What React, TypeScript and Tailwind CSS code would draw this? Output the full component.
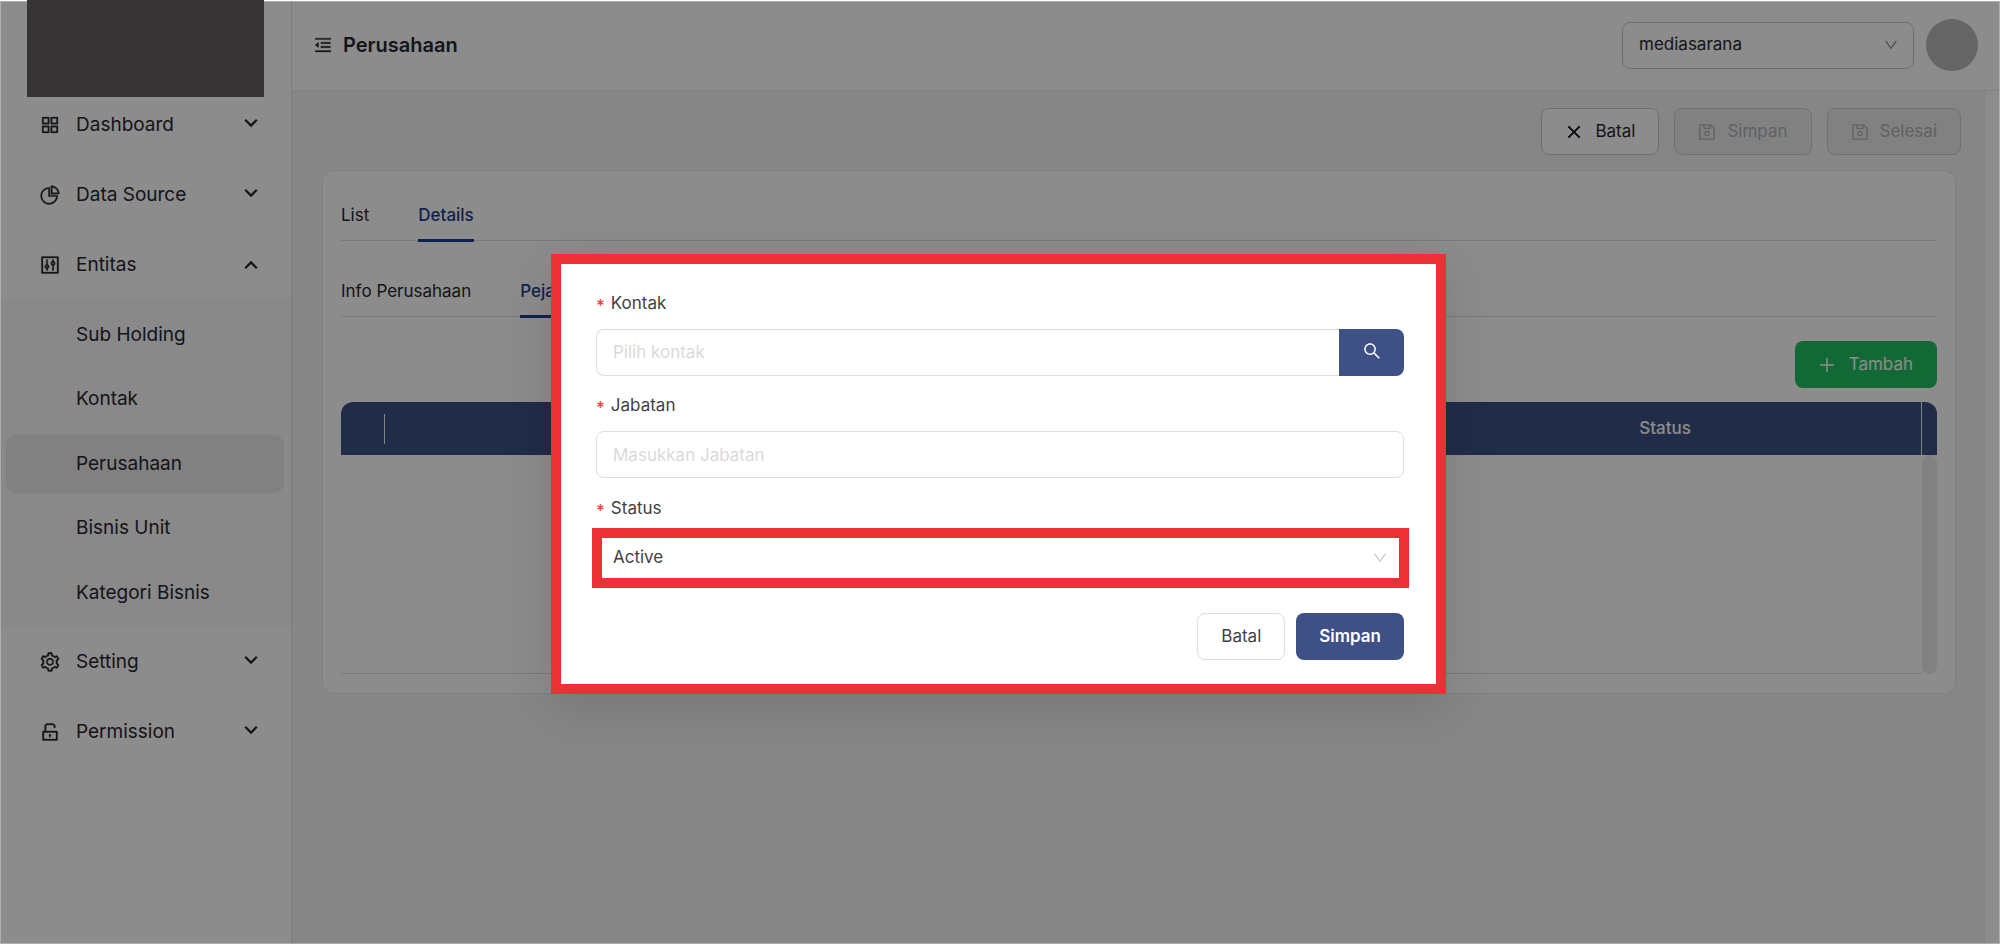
import type { ReactNode } from "react";
import {
  AiOutlineAppstore,
  AiOutlineClose,
  AiOutlineControl,
  AiOutlineDown,
  AiOutlineMenuFold,
  AiOutlinePieChart,
  AiOutlinePlus,
  AiOutlineSave,
  AiOutlineSearch,
  AiOutlineSetting,
  AiOutlineUnlock,
} from "react-icons/ai";

function Caret({ open = false }: { open?: boolean }) {
  return (
    <svg width="14" height="10" viewBox="0 0 14 10" fill="none" stroke="currentColor" strokeWidth="2.2" className={open ? "mt-0" : "-mt-1"} aria-hidden="true">
      <path d={open ? "M1.2 8.2 7 2.4l5.8 5.8" : "M1.2 1.8 7 7.6l5.8-5.8"} />
    </svg>
  );
}

function MenuRow({ icon, label, open }: { icon: ReactNode; label: string; open?: boolean }) {
  return (
    <button type="button" aria-expanded={!!open} className="flex h-[54px] w-full items-center pr-[33px] pl-[39px] text-left">
      <span className="w-[37px] text-[22px]">{icon}</span>
      <span className="flex-1 text-[19px]">{label}</span>
      <Caret open={open} />
    </button>
  );
}

const entitas = ["Sub Holding", "Kontak", "Perusahaan", "Bisnis Unit", "Kategori Bisnis"];

function Sidebar() {
  return (
    <aside className="flex w-[292px] shrink-0 flex-col border-r border-[#e4e4e7] bg-white">
      <div className="relative z-20 mr-[27px] ml-[27px] h-[97px] bg-[#363435]" />
      <nav className="flex flex-col gap-[8px] pt-px">
        <div className="flex flex-col gap-[16px]">
          <MenuRow icon={<AiOutlineAppstore strokeWidth="16" />} label="Dashboard" />
          <MenuRow icon={<AiOutlinePieChart strokeWidth="16" />} label="Data Source" />
          <MenuRow icon={<AiOutlineControl strokeWidth="16" />} label="Entitas" open />
        </div>
        <div className="flex h-[327px] flex-col justify-between border-y border-[#f4f4f5] bg-[#fafafa] pt-[5px] pr-[7px] pb-[4px] pl-[6px]">
          {entitas.map((name) => (
            <a
              key={name}
              href="#"
              className={
                name === "Perusahaan"
                  ? "flex h-[58px] items-center rounded-[10px] bg-[#ebebeb] pl-[70px] text-[19px]"
                  : "flex h-[58px] items-center rounded-[10px] pl-[70px] text-[19px]"
              }
            >
              {name}
            </a>
          ))}
        </div>
        <div className="flex flex-col gap-[16px]">
          <MenuRow icon={<AiOutlineSetting strokeWidth="16" />} label="Setting" />
          <MenuRow icon={<AiOutlineUnlock strokeWidth="16" />} label="Permission" />
        </div>
      </nav>
    </aside>
  );
}

function Header() {
  return (
    <header className="flex h-[91px] items-center border-b border-[#ececee] bg-white pr-[22px] pl-[21px]">
      <button type="button" aria-label="Menu" className="text-[20px]">
        <AiOutlineMenuFold strokeWidth="16" />
      </button>
      <h1 className="ml-[10px] flex-1 text-[20px] font-semibold">Perusahaan</h1>
      <div className="relative w-[292px]">
        <select aria-label="Akun" className="h-[47px] w-full appearance-none rounded-[8px] border border-[#c4cad0] bg-white pl-[16px] text-[17px]">
          <option>mediasarana</option>
        </select>
        <AiOutlineDown className="pointer-events-none absolute top-[15px] right-[15px] text-[16px] text-[#8a8d92]" />
      </div>
      <div className="ml-[12px] size-[52px] rounded-full bg-[#b8b8b8]" />
    </header>
  );
}

function Tabs({ items, active }: { items: string[]; active: string }) {
  return (
    <div role="tablist" className="flex h-[53px] gap-[49px] border-b border-[#dedee0] text-[17px]">
      {items.map((item) => (
        <button
          key={item}
          type="button"
          role="tab"
          aria-selected={item === active}
          className={
            item === active
              ? "-mb-[2px] border-b-[3px] border-[#1e3c90] pt-[4px] font-medium text-[#1e3c90]"
              : "-mb-[2px] border-b-[3px] border-transparent pt-[4px]"
          }
        >
          {item}
        </button>
      ))}
    </div>
  );
}

function PejabatTable() {
  return (
    <div className="mt-[14px] flex h-[272px] flex-col">
      <div className="flex h-[53px] overflow-hidden rounded-t-[12px] bg-[#3c5083]">
        <div className="flex-1">
          <table className="h-[53px] w-full table-fixed border-collapse text-[17px] text-white">
            <thead>
              <tr>
                <th className="w-[44px] p-0">
                  <div className="h-[30px] border-r border-white/90" />
                </th>
                <th />
                <th />
                <th className="p-0 font-medium">Status</th>
              </tr>
            </thead>
          </table>
        </div>
        <div className="w-[16px] border-l border-white/90" />
      </div>
      <div className="flex flex-1">
        <div className="flex-1 border-b border-[#dadadc]" />
        <div className="w-[15px] rounded-full bg-[#ececec]" />
      </div>
    </div>
  );
}

const disabledButton =
  "flex h-[47px] items-center gap-[10px] rounded-[8px] border border-[#cacdd1] bg-[#ebebeb] pr-[23px] pl-[22px] text-[17px] text-[#aeb1b6]";

function Content() {
  return (
    <div className="flex flex-1">
      <main className="flex-1 bg-[#f4f4f5] pt-[17px] pl-[30px]">
        <div className="flex justify-end gap-[15px] pr-[23px]">
          <button type="button" className="flex h-[47px] items-center gap-[12px] rounded-[8px] border border-[#c4cad0] bg-white pr-[23px] pl-[23px] text-[17px]">
            <AiOutlineClose className="text-[18px]" strokeWidth="50" />
            Batal
          </button>
          <button type="button" disabled className={disabledButton}>
            <AiOutlineSave className="text-[20px]" />
            Simpan
          </button>
          <button type="button" disabled className={disabledButton}>
            <AiOutlineSave className="text-[20px]" />
            Selesai
          </button>
        </div>
        <section className="mt-[15px] mr-[28px] rounded-[12px] border border-[#e9e9eb] bg-white px-[18px] pt-[17px] pb-[19px]">
          <Tabs items={["List", "Details"]} active="Details" />
          <div className="mt-[23px]">
            <Tabs items={["Info Perusahaan", "Pejabat"]} active="Pejabat" />
          </div>
          <div className="mt-[24px] flex justify-end">
            <button type="button" className="flex h-[47px] items-center gap-[12px] rounded-[8px] bg-[#24c063] pr-[24px] pl-[22px] text-[17px] text-white">
              <AiOutlinePlus className="text-[20px]" />
              Tambah
            </button>
          </div>
          <PejabatTable />
        </section>
      </main>
      <div className="w-[16px] border-l border-[#f0f0f0] bg-white" />
    </div>
  );
}

function Label({ htmlFor, children }: { htmlFor: string; children: ReactNode }) {
  return (
    <label htmlFor={htmlFor} className="mb-[10px] flex h-[30px] items-center gap-[6px] text-[17px] text-[#3f3f46]">
      <span className="pt-[5px] font-medium text-[#ef4444]">*</span>
      {children}
    </label>
  );
}

function PejabatDialog() {
  return (
    <div className="absolute inset-x-0 top-px bottom-0 z-10 flex items-start justify-center border border-white/30 bg-black/45 pt-[252px] pr-[3px]">
      <form
        role="dialog"
        aria-modal="true"
        className="w-[895px] border-[10px] border-[#ec3035] bg-white pt-[25px] pr-[32px] pb-[24px] pl-[35px] shadow-[0_12px_48px_rgba(0,0,0,0.12)]"
      >
        <Label htmlFor="kontak">Kontak</Label>
        <div className="flex h-[47px]">
          <input id="kontak" placeholder="Pilih kontak" className="min-w-0 flex-1 rounded-l-[8px] border border-r-0 border-[#dedcde] px-[16px] text-[17px] placeholder:text-[#dcd8da]" />
          <button type="button" aria-label="Cari" className="flex w-[65px] items-center justify-center rounded-r-[8px] bg-[#3e5086] text-[20px] text-white">
            <AiOutlineSearch className="-mt-[4px]" />
          </button>
        </div>
        <div className="mt-[15px]">
          <Label htmlFor="jabatan">Jabatan</Label>
          <input id="jabatan" placeholder="Masukkan Jabatan" className="h-[47px] w-full rounded-[8px] border border-[#dedcde] px-[16px] text-[17px] placeholder:text-[#dcd8da]" />
        </div>
        <div className="mt-[16px]">
          <Label htmlFor="status">Status</Label>
          <div className="relative">
            <select id="status" className="block h-[47px] w-full appearance-none rounded-[8px] border border-[#dedcde] bg-white pl-[16px] text-[17px] text-[#3f3f46]">
              <option>Active</option>
            </select>
            <AiOutlineDown className="absolute top-[16px] right-[16px] text-[16px] text-[#c9c6c8]" />
            <span className="pointer-events-none absolute -top-[6px] -right-[5px] -bottom-[7px] -left-[4px] border-[10px] border-[#ec3035]" />
          </div>
        </div>
        <div className="mt-[32px] flex justify-end gap-[11px]">
          <button type="button" className="h-[47px] rounded-[8px] border border-[#dedcde] px-[23px] text-[17px] text-[#3f3f46]">
            Batal
          </button>
          <button type="submit" className="h-[47px] rounded-[8px] bg-[#3e5086] px-[23px] text-[17px] font-semibold text-white">
            Simpan
          </button>
        </div>
      </form>
    </div>
  );
}

export default function App() {
  return (
    <div className="relative flex min-h-screen bg-white font-['Inter',sans-serif] text-[#27272f]">
      <Sidebar />
      <div className="flex min-w-0 flex-1 flex-col">
        <Header />
        <Content />
      </div>
      <PejabatDialog />
    </div>
  );
}
